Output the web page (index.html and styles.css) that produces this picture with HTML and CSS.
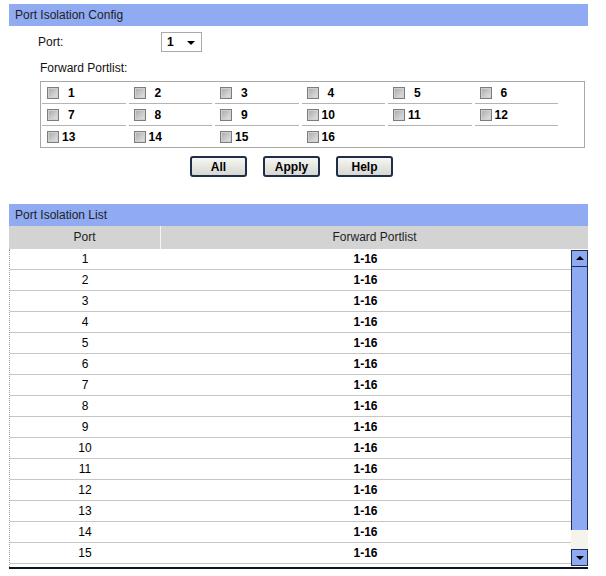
FILE: index.html
```html
<!DOCTYPE html>
<html lang="en">
<head>
<meta charset="UTF-8">
<title>Port Isolation</title>
<link rel="stylesheet" href="styles.css">
</head>
<body>
<div class="page">
    <div class="bar">Port Isolation Config</div>

    <div class="form-row">
        <span class="form-label">Port:</span>
        <span class="select">1<span class="caret"></span></span>
    </div>
    <div class="form-row second">
        <span class="form-label wide">Forward Portlist:</span>
    </div>

    <div class="ports">
        <div class="cell"><span class="check"></span><span class="num one">1</span></div>
        <div class="cell"><span class="check"></span><span class="num one">2</span></div>
        <div class="cell"><span class="check"></span><span class="num one">3</span></div>
        <div class="cell"><span class="check"></span><span class="num one">4</span></div>
        <div class="cell"><span class="check"></span><span class="num one">5</span></div>
        <div class="cell"><span class="check"></span><span class="num one">6</span></div>
        <div class="cell"><span class="check"></span><span class="num one">7</span></div>
        <div class="cell"><span class="check"></span><span class="num one">8</span></div>
        <div class="cell"><span class="check"></span><span class="num one">9</span></div>
        <div class="cell"><span class="check"></span><span class="num">10</span></div>
        <div class="cell"><span class="check"></span><span class="num">11</span></div>
        <div class="cell"><span class="check"></span><span class="num">12</span></div>
        <div class="cell last"><span class="check"></span><span class="num">13</span></div>
        <div class="cell last"><span class="check"></span><span class="num">14</span></div>
        <div class="cell last"><span class="check"></span><span class="num">15</span></div>
        <div class="cell last"><span class="check"></span><span class="num">16</span></div>
    </div>

    <div class="buttons">
        <button class="btn">All</button>
        <button class="btn">Apply</button>
        <button class="btn">Help</button>
    </div>

    <div class="bar list-bar">Port Isolation List</div>
    <div class="list-head">
        <div class="col-port">Port</div>
        <div class="col-fwd">Forward Portlist</div>
    </div>
    <div class="list-body">
        <div class="rows" id="rows"></div>
        <div class="scroll">
            <div class="sbtn"><span class="tri up"></span></div>
            <div class="thumb"></div>
            <div class="track"></div>
            <div class="sbtn"><span class="tri down"></span></div>
        </div>
    </div>
</div>
<script>
// only the rows that fit in the visible part of the list
var rows = document.getElementById('rows');
var html = '';
for (var i = 1; i <= 15; i++) {
    html += '<div class="row"><div class="col-port">' + i + '</div><div class="col-fwd">1-16</div></div>';
}
rows.innerHTML = html;
</script>
</body>
</html>
```

FILE: styles.css
```css
body {
    margin: 0;
    font-family: "Liberation Sans", Arial, sans-serif;
    font-size: 12px;
    color: #000;
    background: #fff;
}
.page {
    width: 579px;
    margin-left: 9px;
    padding-top: 4px;
}
.bar {
    height: 22px;
    line-height: 22px;
    padding-left: 6px;
    color: #1e1e1e;
    background: #90abf2;
}
.form-row {
    display: flex;
    align-items: center;
    height: 20px;
    margin-top: 6px;
}
.form-label {
    width: 123px;
    padding-left: 29px;
    color: #111;
}
.form-label.wide {
    width: auto;
    padding-left: 31px;
}
.select {
    position: relative;
    box-sizing: border-box;
    width: 41px;
    height: 20px;
    line-height: 18px;
    padding-left: 5px;
    border: 1px solid #a9a9a9;
    font-weight: bold;
}
.caret {
    position: absolute;
    right: 6px;
    top: 8px;
    border-left: 4px solid transparent;
    border-right: 4px solid transparent;
    border-top: 4px solid #000;
}
.ports {
    display: grid;
    grid-template-columns: repeat(6, 86.5px);
    box-sizing: border-box;
    width: 545px;
    margin: 3px 0 0 31px;
    padding-left: 1px;
    border: 1px solid #a8a8a8;
}
.cell {
    display: flex;
    align-items: center;
    height: 21px;
    margin-right: 3px;
    padding-left: 5px;
    border-bottom: 1px solid #b4b4b4;
    font-weight: bold;
}
.cell.last {
    border-bottom: none;
}
.check {
    box-sizing: border-box;
    width: 12px;
    height: 12px;
    margin-right: 3px;
    border: 1px solid #7c7c7c;
    background: linear-gradient(135deg, #a8a8a8, #e6e6e6);
    box-shadow: inset 0 0 0 1px #d0d0d0;
}
.num.one {
    padding-left: 6px;
}
.buttons {
    display: flex;
    gap: 16px;
    margin: 8px 0 0 181px;
}
.btn {
    box-sizing: border-box;
    width: 57px;
    height: 21px;
    padding: 0;
    border: 2px solid #1d2d4a;
    border-radius: 3px;
    background: linear-gradient(#f6f6f2, #d8d8d2);
    font-family: "Liberation Sans", Arial, sans-serif;
    font-size: 12px;
    font-weight: bold;
    color: #000;
}
.list-bar {
    margin-top: 27px;
}
.list-head {
    display: flex;
    height: 23px;
    line-height: 23px;
    color: #1e1e1e;
    background: #d3d3d3;
}
.list-head .col-port {
    border-right: 1px solid #f4f4f4;
}
.list-head .col-fwd {
    flex: 1;
}
.col-port {
    width: 151px;
    text-align: center;
}
.col-fwd {
    text-align: center;
}
.list-body {
    display: flex;
    height: 318px;
    border-bottom: 2px solid #0d1424;
}
.rows {
    width: 561px;
    overflow: hidden;
    border-left: 1px dotted #9a9a9a;
}
.row {
    display: flex;
    height: 20px;
    line-height: 20px;
    border-bottom: 1px solid #c6c6c6;
}
.row .col-port {
    width: 150px;
}
.row .col-fwd {
    flex: 1;
    font-weight: bold;
}
.scroll {
    display: flex;
    flex-direction: column;
    width: 17px;
    padding-top: 1px;
}
.sbtn {
    box-sizing: border-box;
    position: relative;
    height: 17px;
    border: 1px solid #1f2a55;
    background: #8eaaf2;
}
.thumb {
    height: 263px;
    box-sizing: border-box;
    border-left: 1px solid #1f2a55;
    border-right: 1px solid #1f2a55;
    background: #8eaaf2;
}
.track {
    height: 19px;
    background: #f4f4ec;
}
.tri {
    position: absolute;
    left: 4px;
    border-left: 4px solid transparent;
    border-right: 4px solid transparent;
}
.tri.up {
    top: 5px;
    border-bottom: 4px solid #000;
}
.tri.down {
    top: 6px;
    border-top: 4px solid #000;
}
```
